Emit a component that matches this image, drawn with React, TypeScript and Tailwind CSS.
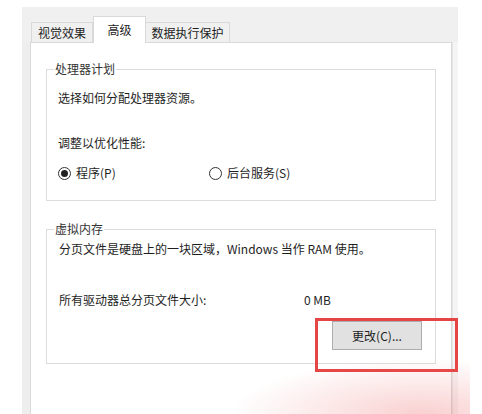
import React from "react";

function Radio({ checked, label }: { checked?: boolean; label: string }) {
  return (
    <div className="flex items-center gap-[5px]">
      <span className="flex h-[13px] w-[13px] items-center justify-center rounded-full border border-[#333] bg-white">
        {checked && <span className="h-[7px] w-[7px] rounded-full bg-[#222]" />}
      </span>
      <span>{label}</span>
    </div>
  );
}

export default function App() {
  return (
    <div
      className="relative h-[414px] w-[482px] overflow-hidden bg-white text-[12px] leading-[16px] text-[#1e1e1e]"
      style={{ fontFamily: '"Noto Sans CJK SC", "Noto Sans", sans-serif' }}
    >
      <div className="ml-[22px] flex h-full w-[436px] flex-col pt-[7px]">
        {/* tab strip */}
        <div className="flex h-[35px] items-end bg-[#f0f0f0] pl-[9px]">
          <div className="flex h-[20px] w-[62px] items-center justify-center border border-b-0 border-[#d9d9d9] bg-[#f0f0f0]">
            视觉效果
          </div>
          <div className="relative z-10 -mb-px flex h-[27px] w-[53px] items-center justify-center border border-b-0 border-[#d9d9d9] bg-white">
            高级
          </div>
          <div className="flex h-[20px] w-[84px] items-center justify-center border border-b-0 border-l-0 border-[#d9d9d9] bg-[#f0f0f0]">
            数据执行保护
          </div>
        </div>

        {/* body */}
        <div className="flex flex-1">
          <div className="w-[8px] bg-[#eeeeee]" />
          <div className="flex-1 border border-b-0 border-[#d9d9d9] bg-white px-[15px] pt-[18px]">
            <fieldset className="border border-[#dcdcdc] px-[11px] pb-[19px]">
              <legend className="-ml-[4px] px-[1px] text-[#333]">处理器计划</legend>
              <div className="mt-[13px]">选择如何分配处理器资源。</div>
              <div className="mt-[29px]">调整以优化性能:</div>
              <div className="mt-[14px] flex">
                <div className="w-[151px]">
                  <Radio checked label="程序(P)" />
                </div>
                <Radio label="后台服务(S)" />
              </div>
            </fieldset>

            <fieldset className="mt-[20px] border border-[#dcdcdc] px-[11px] pb-[13px]">
              <legend className="-ml-[4px] px-[1px] text-[#333]">虚拟内存</legend>
              <div className="mt-[4px] pl-[1px]">分页文件是硬盘上的一块区域，Windows 当作 RAM 使用。</div>
              <div className="mt-[35px] flex pl-[1px]">
                <span className="w-[245px]">所有驱动器总分页文件大小:</span>
                <span>0 MB</span>
              </div>
              <div className="mt-[13px] flex justify-end pr-[2px]">
                <button className="h-[29px] w-[90px] border border-[#adadad] bg-[#e1e1e1] text-[12px] text-[#1e1e1e]">
                  更改(C)...
                </button>
              </div>
            </fieldset>
          </div>
          <div className="w-[6px] border-l border-[#e6e6e6] bg-[#f5f5f5]" />
        </div>
      </div>

      {/* highlight annotation */}
      <div className="pointer-events-none absolute left-[315px] top-[318px] h-[54px] w-[143px] border-[3px] border-[#e64545]" />
      <div className="pointer-events-none absolute bottom-0 left-[230px] h-[56px] w-[240px] bg-[radial-gradient(ellipse_at_80%_100%,rgba(238,110,110,0.32),rgba(255,255,255,0)_70%)]" />
    </div>
  );
}
